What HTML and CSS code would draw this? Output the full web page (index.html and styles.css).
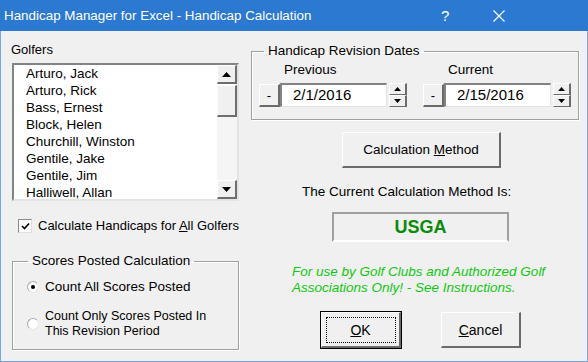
FILE: index.html
```html
<!DOCTYPE html>
<html lang="en">

<head>
  <meta charset="UTF-8" />
  <title>Handicap Manager for Excel - Handicap Calculation</title>
  <link rel="stylesheet" href="styles.css">
</head>

<body>
  <div class="dialog">
    <div class="titlebar">
      <span class="title">Handicap Manager for Excel - Handicap Calculation</span>
      <span class="help">?</span>
      <span class="close">
        <svg width="12" height="12" viewBox="0 0 12 12"><path d="M0.5 0.5 L11.5 11.5 M11.5 0.5 L0.5 11.5" stroke="#fff" stroke-width="1.2" fill="none"/></svg>
      </span>
    </div>

    <div class="content">
      <div class="col-left">
        <div class="label">Golfers</div>
        <div class="listbox">
          <ul class="items">
            <li>Arturo, Jack</li>
            <li>Arturo, Rick</li>
            <li>Bass, Ernest</li>
            <li>Block, Helen</li>
            <li>Churchill, Winston</li>
            <li>Gentile, Jake</li>
            <li>Gentile, Jim</li>
            <li>Halliwell, Allan</li>
          </ul>
          <div class="scrollbar">
            <div class="sb-btn">
              <svg width="9" height="5" viewBox="0 0 9 5"><path d="M4.5 0 L9 5 L0 5 Z" fill="#000"/></svg>
            </div>
            <div class="sb-thumb"></div>
            <div class="sb-track"></div>
            <div class="sb-btn">
              <svg width="9" height="5" viewBox="0 0 9 5"><path d="M0 0 L9 0 L4.5 5 Z" fill="#000"/></svg>
            </div>
          </div>
        </div>

        <div class="check-row">
          <span class="checkbox">
            <svg width="9" height="9" viewBox="0 0 9 9"><path d="M1 4 L3.5 6.5 L8 1.5" stroke="#000" stroke-width="1.6" fill="none"/></svg>
          </span>
          <span>Calculate Handicaps for <u>A</u>ll Golfers</span>
        </div>

        <fieldset class="group scores">
          <legend>Scores Posted Calculation</legend>
          <div class="radio-row">
            <span class="radio checked"></span>
            <span>Count All Scores Posted</span>
          </div>
          <div class="radio-row small">
            <span class="radio"></span>
            <span>Count Only Scores Posted In<br>This Revision Period</span>
          </div>
        </fieldset>
      </div>

      <div class="col-right">
        <fieldset class="group dates">
          <legend>Handicap Revision Dates</legend>
          <div class="date-row">
            <div class="date-field">
              <div class="date-label">Previous</div>
              <div class="date-controls">
                <div class="btn minus">-</div>
                <div class="textbox">2/1/2016</div>
                <div class="spin">
                  <div class="spin-btn"><svg width="7" height="4" viewBox="0 0 7 4"><path d="M3.5 0 L7 4 L0 4 Z" fill="#000"/></svg></div>
                  <div class="spin-btn"><svg width="7" height="4" viewBox="0 0 7 4"><path d="M0 0 L7 0 L3.5 4 Z" fill="#000"/></svg></div>
                </div>
              </div>
            </div>
            <div class="date-field">
              <div class="date-label">Current</div>
              <div class="date-controls">
                <div class="btn minus">-</div>
                <div class="textbox">2/15/2016</div>
                <div class="spin">
                  <div class="spin-btn"><svg width="7" height="4" viewBox="0 0 7 4"><path d="M3.5 0 L7 4 L0 4 Z" fill="#000"/></svg></div>
                  <div class="spin-btn"><svg width="7" height="4" viewBox="0 0 7 4"><path d="M0 0 L7 0 L3.5 4 Z" fill="#000"/></svg></div>
                </div>
              </div>
            </div>
          </div>
        </fieldset>

        <div class="btn calc-btn"><span>Calculation <u>M</u>ethod</span></div>
        <div class="method-label">The Current Calculation Method Is:</div>
        <div class="method-box">USGA</div>
        <div class="note">For use by Golf Clubs and Authorized Golf<br>Associations Only! - See Instructions.</div>

        <div class="actions">
          <div class="btn action default"><span class="focus"><u>O</u>K</span></div>
          <div class="btn action"><span><u>C</u>ancel</span></div>
        </div>
      </div>
    </div>
  </div>
</body>

</html>
```

FILE: styles.css
```css
* {
  box-sizing: border-box;
  margin: 0;
  padding: 0;
}

body {
  font-family: 'Liberation Sans', Arial, sans-serif;
  font-size: 13px;
  color: #000;
  background: #f0f0f0;
}

.dialog {
  width: 588px;
  height: 362px;
  display: flex;
  flex-direction: column;
}

.titlebar {
  height: 31px;
  background: #2b79d0;
  color: #fff;
  display: flex;
  align-items: center;
  font-family: 'Liberation Sans', sans-serif;
  font-size: 13.4px;
}

.title {
  padding-left: 4px;
  flex: 1;
}

.help {
  width: 16px;
  margin-right: 36px;
  font-size: 15px;
}

.close {
  display: flex;
  margin-right: 83px;
}

.content {
  flex: 1;
  background: #f0f0f0;
  border: 1px solid #76a6de;
  border-top: none;
  display: flex;
  gap: 12px;
  padding: 11px 0 0 10px;
}

.col-left {
  width: 228px;
  display: flex;
  flex-direction: column;
}

.col-right {
  width: 328px;
  display: flex;
  flex-direction: column;
}

.label {
  line-height: 16px;
}

/* list box */
.listbox {
  margin: 5px 0 0 1px;
  width: 227px;
  height: 138px;
  background: #fff;
  border-top: 2px solid #838383;
  border-left: 2px solid #838383;
  border-right: 2px solid #e3e3e3;
  border-bottom: 2px solid #e3e3e3;
  display: flex;
}

.items {
  list-style: none;
  flex: 1;
  padding-left: 12px;
  font-size: 13.5px;
  line-height: 17px;
  overflow: hidden;
}

.scrollbar {
  width: 20px;
  display: flex;
  flex-direction: column;
}

.sb-btn {
  height: 19px;
  background: #f0f0f0;
  border-top: 1px solid #fff;
  border-left: 1px solid #fff;
  border-right: 2px solid #6e6e6e;
  border-bottom: 2px solid #6e6e6e;
  display: flex;
  align-items: center;
  justify-content: center;
}

.sb-thumb {
  height: 32px;
  margin-top: 1px;
  background: #f0f0f0;
  border-top: 1px solid #fff;
  border-left: 1px solid #fff;
  border-right: 2px solid #6e6e6e;
  border-bottom: 2px solid #6e6e6e;
}

.sb-track {
  flex: 1;
  background: #f5f5f5;
}

/* checkbox */
.check-row {
  margin-top: 17px;
  display: flex;
  align-items: center;
  line-height: 16px;
  padding-left: 7px;
  gap: 6px;
}

.checkbox {
  width: 14px;
  height: 14px;
  background: #fff;
  border-top: 1px solid #8a8a8a;
  border-left: 1px solid #8a8a8a;
  border-right: 1px solid #e0e0e0;
  border-bottom: 1px solid #e0e0e0;
  display: flex;
  align-items: center;
  justify-content: center;
}

/* group frames */
.group {
  border: 1px solid #a0a0a0;
  box-shadow: inset 1px 1px 0 #fff, 1px 1px 0 #fff;
  padding: 0;
}

.group legend {
  line-height: 16px;
  padding: 0 4px;
  font-size: 13.5px;
}

.scores {
  margin: 19px 0 0 1px;
  width: 227px;
  height: 97px;
  padding: 10px 0 0 14px;
}

.scores legend {
  margin-left: 1px;
}

.radio-row {
  display: flex;
  align-items: center;
  gap: 6px;
  line-height: 16px;
  font-size: 13.5px;
}

.radio-row.small {
  margin-top: 14px;
  font-size: 12.5px;
  line-height: 15px;
}

.radio {
  width: 12px;
  height: 12px;
  border-radius: 50%;
  background: #fff;
  border: 1px solid #a9a9a9;
  border-bottom-color: #e6e6e6;
  border-right-color: #e6e6e6;
  display: flex;
  align-items: center;
  justify-content: center;
}

.radio.checked::after {
  content: "";
  width: 4px;
  height: 4px;
  border-radius: 50%;
  background: #000;
}

/* dates */
.dates {
  margin-top: 1px;
  height: 77px;
}

.dates legend {
  margin-left: 12px;
}

.date-row {
  display: flex;
  gap: 16px;
  padding: 3px 0 0 7px;
}

.date-label {
  line-height: 16px;
  padding-left: 25px;
  font-size: 13.5px;
}

.date-controls {
  margin-top: 5px;
  display: flex;
  height: 24px;
}

.btn {
  background: #f0f0f0;
  border-top: 1px solid #fff;
  border-left: 1px solid #fff;
  border-right: 2px solid #6b6b6b;
  border-bottom: 2px solid #6b6b6b;
  display: flex;
  align-items: center;
  justify-content: center;
  font-size: 13px;
}

.minus {
  width: 21px;
  height: 23px;
  margin-top: 1px;
}

.textbox {
  width: 107px;
  background: #fff;
  border-top: 2px solid #838383;
  border-left: 2px solid #838383;
  border-right: 1px solid #e3e3e3;
  border-bottom: 1px solid #e3e3e3;
  font-size: 15px;
  line-height: 20px;
  padding-left: 11px;
}

.spin {
  width: 18px;
  margin-left: 2px;
  display: flex;
  flex-direction: column;
}

.spin-btn {
  height: 12px;
  background: #f0f0f0;
  border-top: 1px solid #fff;
  border-left: 1px solid #fff;
  border-right: 2px solid #6b6b6b;
  border-bottom: 1px solid #6b6b6b;
  display: flex;
  align-items: center;
  justify-content: center;
}

.calc-btn {
  margin: 12px 0 0 91px;
  width: 159px;
  height: 36px;
  font-size: 13.5px;
}

.method-label {
  margin: 16px 0 0 51px;
  line-height: 16px;
  font-size: 13.5px;
}

.method-box {
  margin: 12px 0 0 81px;
  width: 177px;
  height: 30px;
  border: 2px solid #a0a0a0;
  border-bottom-color: #fff;
  color: #0a8a0a;
  font-weight: bold;
  font-size: 18px;
  display: flex;
  align-items: center;
  justify-content: center;
}

.note {
  margin: 22px 0 0 41px;
  color: #11c711;
  font-style: italic;
  font-size: 13.5px;
  line-height: 16px;
}

.actions {
  margin: 16px 0 0 70px;
  display: flex;
  gap: 40px;
}

.action {
  width: 80px;
  height: 36px;
  font-size: 14px;
}

.action.default {
  outline: 1px solid #000;
}

.focus {
  width: 70px;
  height: 26px;
  border: 1px dotted #000;
  display: flex;
  align-items: center;
  justify-content: center;
}
```
